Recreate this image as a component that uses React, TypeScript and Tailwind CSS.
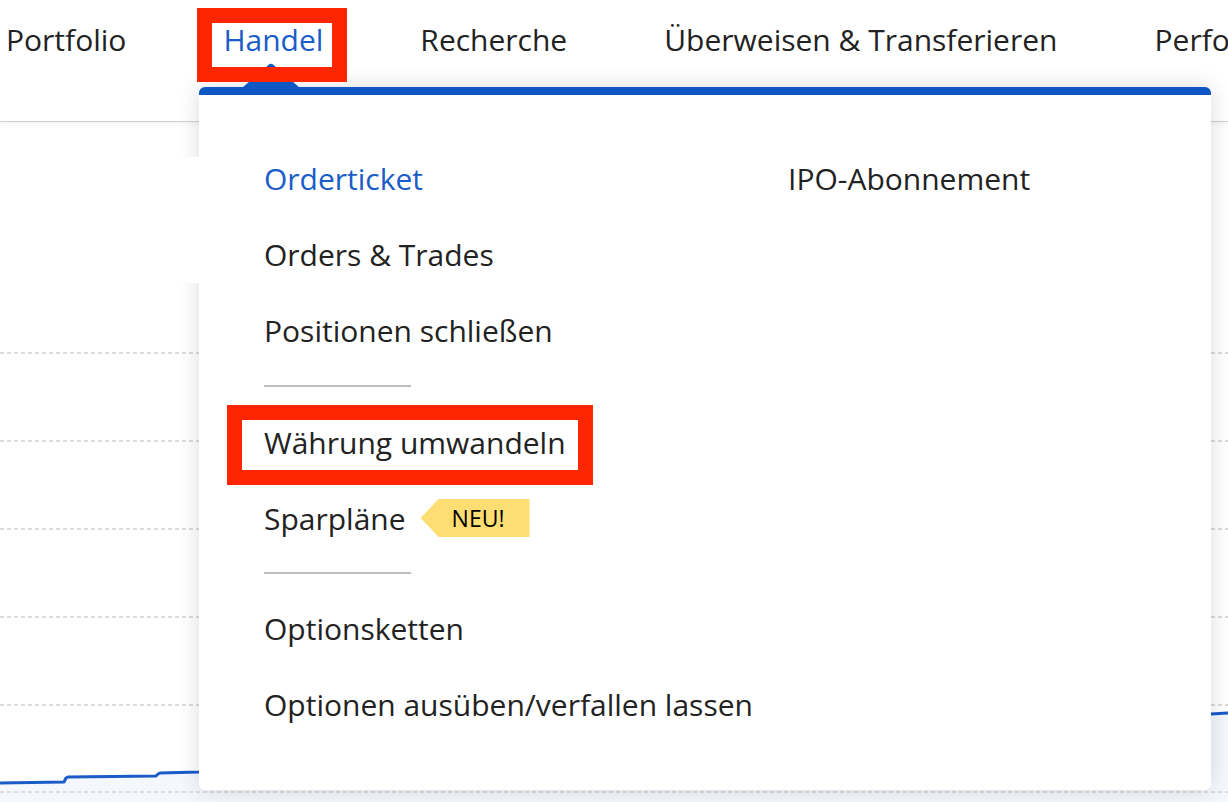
import React from "react";

const navItems = ["Portfolio", "Handel", "Recherche", "Überweisen & Transferieren", "Performance"];

function Row({ children, className = "" }: { children: React.ReactNode; className?: string }) {
  return <div className={`h-[76px] flex items-center leading-[41px] whitespace-nowrap ${className}`}>{children}</div>;
}

function Divider({ className = "my-[17px]" }: { className?: string }) {
  return <div className={`h-[2px] w-[147px] bg-[#bdbdbd] ${className}`} />;
}

export default function App() {
  const grid = [353, 441, 529, 617, 705, 792];
  const line = "0,783 64,782 66,778 68,777 156,776 158,774 160,773 199,772 600,750 1000,728 1211,714 1228,713";
  return (
    <div className="relative w-[1228px] h-[802px] overflow-hidden bg-white font-['Open_Sans',sans-serif] text-[#222]">
      <nav className="relative h-[122px] border-b border-[#cfcfcf] shadow-[0_2px_5px_rgba(0,0,0,0.05)] flex items-start gap-[97px] pl-[6px] pt-[19px] whitespace-nowrap text-[30px] leading-[41px]">
        {navItems.map((n) => (
          <span key={n} className={n === "Handel" ? "text-[#1a5cc8]" : ""}>
            {n}
          </span>
        ))}
      </nav>

      <main className="h-[680px]">
        <svg className="block" width="1228" height="680" viewBox="0 122 1228 680">
          <polygon points={`${line} 1228,802 0,802`} fill="#f4f7fd" />
          {grid.map((y) => (
            <line key={y} x1="0" x2="1228" y1={y} y2={y} stroke="#dcdcdc" strokeWidth="2" strokeDasharray="4 3" />
          ))}
          <polyline points={line} fill="none" stroke="#1a5bc8" strokeWidth="3" strokeLinejoin="round" />
        </svg>
      </main>

      {/* dropdown menu */}
      <div className="absolute left-[199px] top-[87px] w-[1012px] h-[703px] bg-white rounded-[6px] border-t-[8px] border-[#0f58c3] shadow-[0_0_22px_rgba(0,0,0,0.14)]">
        <svg className="absolute left-[43px] top-[-32px]" width="58" height="25" viewBox="0 0 58 25">
          <path d="M0 25 L27 1.5 Q29 0 31 1.5 L58 25 Z" fill="#0f58c3" />
        </svg>
        <div className="flex pl-[65px] pt-[45px] text-[30px]">
          <div className="w-[524px] flex flex-col">
            <Row className="text-[#1a5cc8]">Orderticket</Row>
            <Row>Orders &amp; Trades</Row>
            <Row>Positionen schließen</Row>
            <Divider />
            <Row>Währung umwandeln</Row>
            <Row className="gap-[15px]">
              <span>Sparpläne</span>
              <span className="inline-flex items-center h-[38px] w-[109px] pl-[31px] bg-[#fede72] [clip-path:polygon(18px_0,100%_0,100%_100%,18px_100%,0_50%)] text-[23px] font-medium text-black leading-none">
                NEU!
              </span>
            </Row>
            <Divider className="my-[16px]" />
            <Row>Optionsketten</Row>
            <Row>Optionen ausüben/verfallen lassen</Row>
          </div>
          <div className="flex flex-col">
            <Row>IPO-Abonnement</Row>
          </div>
        </div>
      </div>

      {/* white patch over shadow (screenshot artifact) */}
      <div className="absolute left-0 top-[157px] w-[199px] h-[126px] bg-white" />

      {/* red annotation boxes */}
      <div className="absolute left-[197px] top-[8px] w-[150px] h-[74px] border-[15px] border-[#fe2600]" />
      <div className="absolute left-[227px] top-[405px] w-[366px] h-[80px] border-[15px] border-[#fe2600]" />
    </div>
  );
}
